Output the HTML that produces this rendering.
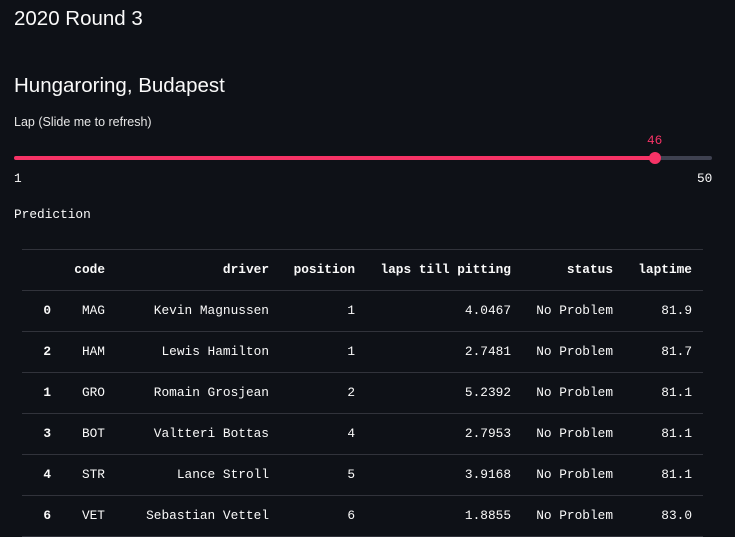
<!DOCTYPE html>
<html><head><style>
body{margin:0;background:#0e1117;width:735px;height:537px;overflow:hidden;color:#fafafa;font-family:"Liberation Sans",sans-serif;position:relative}
.a{position:absolute;white-space:nowrap}
.m{font-family:"Liberation Mono",monospace;font-size:12.8px}
table{position:absolute;left:22px;top:249px;width:681px;border-collapse:collapse;font-family:"Liberation Mono",monospace;font-size:12.8px}
td,th{height:41px;border-top:1px solid #31333b;text-align:right;padding:0 0 2px 0;box-sizing:border-box}
th{font-weight:bold}
tr:last-child td,tr:last-child th{border-bottom:1px solid #31333b}
</style></head><body>
<div class="a" style="left:14px;top:7px;font-size:20.5px">2020 Round 3</div>
<div class="a" style="left:14px;top:74px;font-size:20.5px">Hungaroring, Budapest</div>
<div class="a" style="left:14px;top:115px;font-size:12.5px;color:#e6e6e6">Lap (Slide me to refresh)</div>
<div class="a" style="left:14px;top:156px;width:641px;height:4px;background:#f63366;border-radius:2px"></div>
<div class="a" style="left:655px;top:156px;width:57px;height:4px;background:#3e4150;border-radius:2px"></div>
<div class="a" style="left:649px;top:152px;width:12px;height:12px;background:#f63366;border-radius:50%"></div>
<div class="a m" style="left:647px;top:133px;color:#f63366">46</div>
<div class="a m" style="left:14px;top:171px">1</div>
<div class="a m" style="left:697px;top:171px">50</div>
<div class="a m" style="left:14px;top:207px">Prediction</div>
<table>
<colgroup><col style="width:29px"><col style="width:54px"><col style="width:164px"><col style="width:86px"><col style="width:156px"><col style="width:102px"><col style="width:79px"><col></colgroup>
<tr><th></th><th>code</th><th>driver</th><th>position</th><th>laps till pitting</th><th>status</th><th>laptime</th><th></th></tr>
<tr><th>0</th><td>MAG</td><td>Kevin Magnussen</td><td>1</td><td>4.0467</td><td>No Problem</td><td>81.9</td><td></td></tr>
<tr><th>2</th><td>HAM</td><td>Lewis Hamilton</td><td>1</td><td>2.7481</td><td>No Problem</td><td>81.7</td><td></td></tr>
<tr><th>1</th><td>GRO</td><td>Romain Grosjean</td><td>2</td><td>5.2392</td><td>No Problem</td><td>81.1</td><td></td></tr>
<tr><th>3</th><td>BOT</td><td>Valtteri Bottas</td><td>4</td><td>2.7953</td><td>No Problem</td><td>81.1</td><td></td></tr>
<tr><th>4</th><td>STR</td><td>Lance Stroll</td><td>5</td><td>3.9168</td><td>No Problem</td><td>81.1</td><td></td></tr>
<tr><th>6</th><td>VET</td><td>Sebastian Vettel</td><td>6</td><td>1.8855</td><td>No Problem</td><td>83.0</td><td></td></tr>
</table>
</body></html>
